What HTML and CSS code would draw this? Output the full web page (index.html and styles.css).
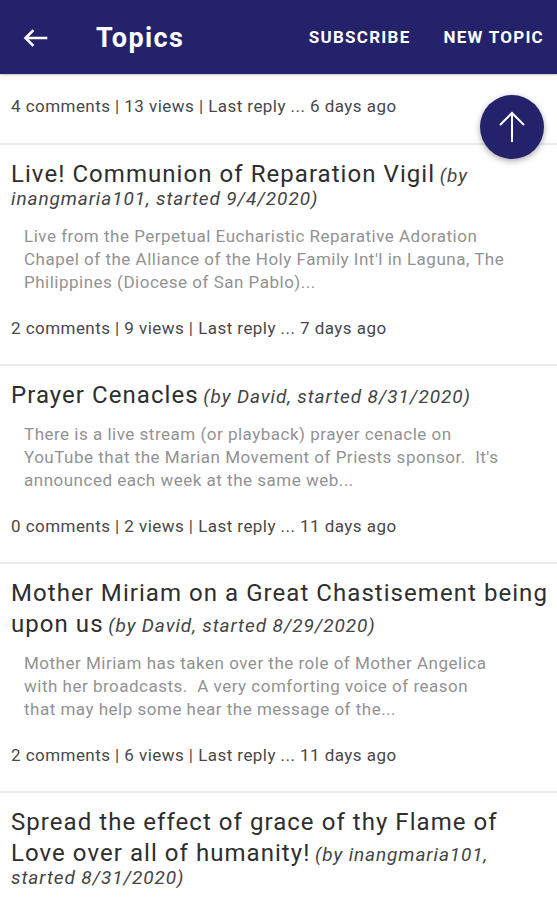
FILE: index.html
```html
<!DOCTYPE html>
<html>
<head>
<meta charset="utf-8">
<link rel="stylesheet" href="styles.css">
</head>
<body>
<header class="appbar">
  <svg class="back" width="26" height="24" viewBox="0 0 26 24"><path d="M24 12H4M10.5 5L3.5 12l7 7" fill="none" stroke="#fff" stroke-width="2.6" stroke-linecap="square"/></svg>
  <h1 class="title">Topics</h1>
  <nav class="actions">
    <span class="action">SUBSCRIBE</span>
    <span class="action">NEW TOPIC</span>
  </nav>
</header>
<main class="list">
  <article class="item item-partial">
    <div class="meta">4 comments | 13 views | Last reply ... 6 days ago</div>
  </article>
  <article class="item">
    <div class="head"><span class="name">Live! Communion of Reparation Vigil</span> <em class="by">(by<br>inangmaria101, started 9/4/2020)</em></div>
    <p class="excerpt">Live from the Perpetual Eucharistic Reparative Adoration<br>Chapel of the Alliance of the Holy Family Int'l in Laguna, The<br>Philippines (Diocese of San Pablo)...</p>
    <div class="meta">2 comments | 9 views | Last reply ... 7 days ago</div>
  </article>
  <article class="item">
    <div class="head"><span class="name">Prayer Cenacles</span> <em class="by">(by David, started 8/31/2020)</em></div>
    <p class="excerpt">There is a live stream (or playback) prayer cenacle on<br>YouTube that the Marian Movement of Priests sponsor.&nbsp; It's<br>announced each week at the same web...</p>
    <div class="meta">0 comments | 2 views | Last reply ... 11 days ago</div>
  </article>
  <article class="item">
    <div class="head"><span class="name">Mother Miriam on a Great Chastisement being<br>upon us</span> <em class="by">(by David, started 8/29/2020)</em></div>
    <p class="excerpt">Mother Miriam has taken over the role of Mother Angelica<br>with her broadcasts.&nbsp; A very comforting voice of reason<br>that may help some hear the message of the...</p>
    <div class="meta">2 comments | 6 views | Last reply ... 11 days ago</div>
  </article>
  <article class="item">
    <div class="head"><span class="name">Spread the effect of grace of thy Flame of<br>Love over all of humanity!</span> <em class="by">(by inangmaria101,<br>started 8/31/2020)</em></div>
    <p class="excerpt">&nbsp;</p>
  </article>
</main>
<button class="fab" aria-label="Scroll to top">
  <svg width="28" height="32" viewBox="0 0 28 32"><path d="M14 31V2M2 14L14 2l12 12" fill="none" stroke="#fff" stroke-width="2"/></svg>
</button>
</body>
</html>
```
FILE: styles.css
```css
html, body {
  margin: 0;
  padding: 0;
  background: #fff;
  font-family: Roboto, "Noto Sans", sans-serif;
  overflow: hidden;
}
.appbar {
  height: 74px;
  background: #24226a;
  display: flex;
  align-items: center;
  color: #fff;
  box-shadow: 0 1px 2px rgba(0,0,0,0.25);
  position: relative;
  z-index: 2;
}
.back {
  margin-left: 22px;
  margin-top: 2px;
}
.title {
  margin: 2px 0 0 48px;
  font-size: 27px;
  font-weight: 700;
  letter-spacing: 1.4px;
  flex: 1;
}
.actions {
  display: flex;
  gap: 33px;
  margin-right: 13px;
}
.action {
  font-size: 17px;
  font-weight: 700;
  letter-spacing: 1.25px;
}
.list {
  display: flex;
  flex-direction: column;
}
.item {
  padding: 14px 2px 25px 11px;
  border-bottom: 2px solid #ebebeb;
  white-space: nowrap;
}
.item-partial {
  padding-top: 21px;
  padding-bottom: 26px;
}
.head {
  font-size: 19px;
  line-height: 18px;
  color: #3a3a3a;
}
.head::after {
  content: "";
  display: inline-block;
  vertical-align: -8px;
}
.name {
  font-size: 24px;
  line-height: 31px;
  letter-spacing: 1.05px;
  color: #2e2e2e;
}
.by {
  font-style: italic;
  letter-spacing: 0.9px;
  color: #444;
}
.excerpt {
  margin: 12px 0 0 13px;
  font-size: 17px;
  line-height: 23px;
  letter-spacing: 0.5px;
  color: #929292;
}
.meta {
  margin-top: 23px;
  font-size: 17px;
  line-height: 22px;
  letter-spacing: 0.45px;
  color: #484848;
}
.item-partial .meta {
  margin-top: 0;
}
.fab {
  position: absolute;
  left: 480px;
  top: 95px;
  width: 64px;
  height: 64px;
  border-radius: 50%;
  border: none;
  background: #24226a;
  box-shadow: 0 2px 6px rgba(0,0,0,0.35);
  display: flex;
  align-items: center;
  justify-content: center;
  padding: 0;
  z-index: 3;
}
```
